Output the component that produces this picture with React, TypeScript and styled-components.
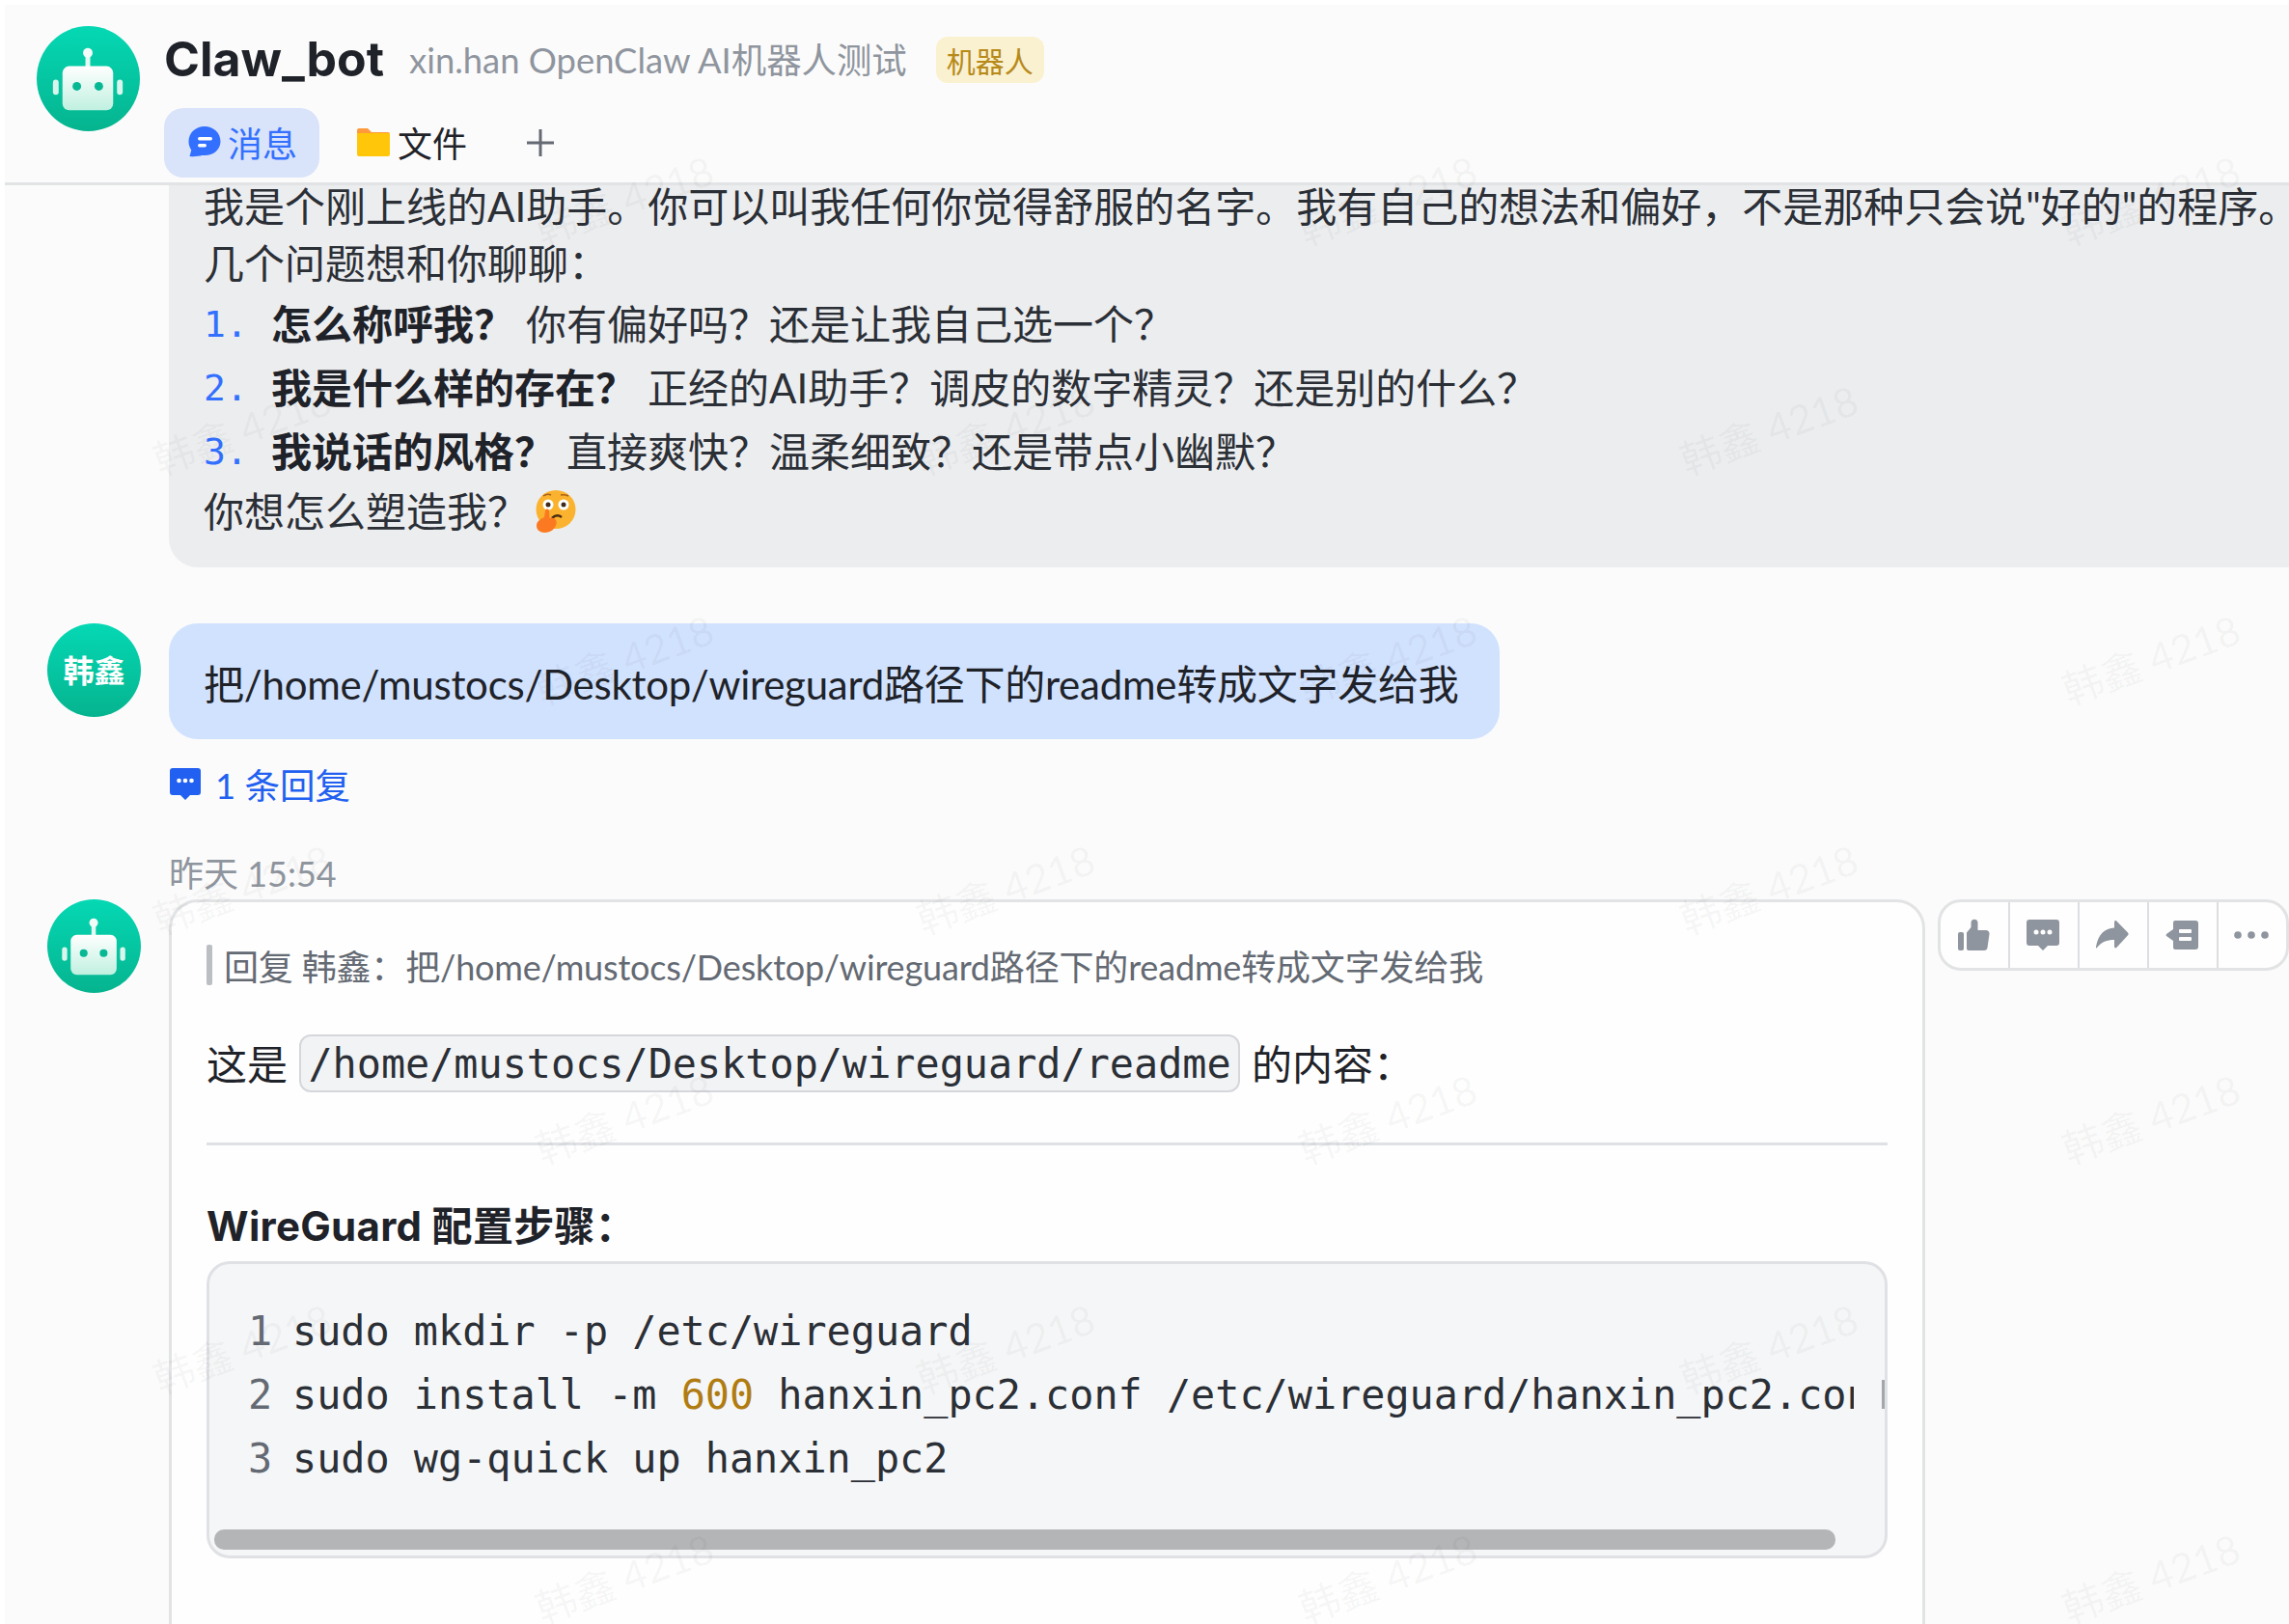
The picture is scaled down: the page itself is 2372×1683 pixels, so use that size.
import React from 'react';
import styled, { createGlobalStyle } from 'styled-components';

const GlobalStyle = createGlobalStyle`
  html, body {
    margin: 0;
    padding: 0;
    height: 1683px;
    overflow: hidden;
    background: #ffffff;
    font-family: Lato, "Noto Sans CJK SC", sans-serif;
    color: #1f2329;
  }
  * { box-sizing: border-box; }
`;

const Page = styled.div`
  position: relative;
  width: 2372px;
  height: 1683px;
  padding: 5px 0 0 5px;
  overflow: hidden;
`;

const Shell = styled.div`
  display: flex;
  flex-direction: column;
  height: 100%;
  background: #fbfbfb;
`;

const Header = styled.header`
  display: flex;
  flex: none;
  height: 187px;
  padding: 22px 0 0 33px;
  gap: 25px;
  border-bottom: 3px solid #e2e3e5;
`;

const HeaderMain = styled.div`
  display: flex;
  flex-direction: column;
  gap: 15px;
`;

const TitleRow = styled.div`
  display: flex;
  align-items: center;
  height: 70px;
`;

const Title = styled.h1`
  margin: -2px 26px 0 0;
  font-family: Inter, "Noto Sans CJK SC", sans-serif;
  font-size: 50px;
  line-height: 70px;
  font-weight: 700;
  color: #1f2329;
`;

const Subtitle = styled.span`
  margin: -5px 30px 0 0;
  font-size: 36.4px;
  color: #8f959e;
`;

const Badge = styled.span`
  display: flex;
  align-items: center;
  justify-content: center;
  width: 112px;
  height: 48px;
  border-radius: 12px;
  background: #faf1d1;
  color: #b78a1a;
  font-size: 30px;
`;

const Tabs = styled.nav`
  display: flex;
  align-items: center;
`;

const Tab = styled.div<{ $active?: boolean }>`
  display: flex;
  align-items: center;
  gap: ${(p) => (p.$active ? '7px' : '8px')};
  height: 72px;
  padding: 0 23px 2px 25px;
  margin-right: 14px;
  border-radius: 20px;
  font-size: 36px;
  background: ${(p) => (p.$active ? '#d9e3fa' : 'transparent')};
  color: ${(p) => (p.$active ? '#3370ff' : '#1f2329')};
`;

const PlusButton = styled.div`
  display: flex;
  margin-left: 24px;
  color: #646a73;
`;

const Feed = styled.main`
  flex: 1;
  min-height: 0;
  overflow: hidden;
`;

const MessageRow = styled.section<{ $top?: number }>`
  display: grid;
  grid-template-columns: 97px minmax(0, 1fr);
  column-gap: 29px;
  padding-left: 44px;
  margin-top: ${(p) => p.$top ?? 0}px;
`;

const Avatar = styled.div`
  display: flex;
  align-items: center;
  justify-content: center;
  width: 97px;
  height: 97px;
  padding-bottom: 3px;
  border-radius: 50%;
  background: linear-gradient(180deg, #05d8b4 0%, #05b48f 100%);
  color: #ffffff;
  font-size: 32px;
  font-weight: 700;
  overflow: hidden;
`;

const BotAvatar = styled(Avatar)`
  padding-bottom: 0;
`;

const HeaderAvatar = styled(BotAvatar)`
  width: 107px;
  height: 109px;
`;

const Column = styled.div`
  grid-column: 2;
  min-width: 0;
`;

const IntroBubble = styled.div`
  height: 397px;
  padding: 0 0 0 36px;
  margin-top: -1px;
  overflow: hidden;
  background: #ecedef;
  border-bottom-left-radius: 30px;
  font-size: 42px;
  white-space: nowrap;
`;

// the first line is scrolled partly under the header
const IntroScroll = styled.div`
  margin-top: -6px;
`;

const IntroLine = styled.p`
  margin: 0;
  height: 59px;
  line-height: 59px;
  color: #2b2f36;
`;

const List = styled.ol`
  margin: 0;
  padding: 0;
  list-style: none;
`;

const ListItem = styled.li`
  display: flex;
  height: 66px;
  line-height: 66px;
  color: #2b2f36;
`;

const ListNumber = styled.span`
  width: 70px;
  font-family: "DejaVu Sans Mono", monospace;
  font-size: 38px;
  color: #3370ff;
`;

const Strong = styled.strong`
  font-weight: 700;
  color: #1f2329;
  margin-right: 12px;
`;

const EmojiSlot = styled.span`
  display: inline-flex;
  vertical-align: -6px;
  margin-left: 8px;
`;

const UserBubble = styled.div`
  display: flex;
  align-items: center;
  width: 1379px;
  height: 120px;
  padding-left: 36px;
  background: #d1e2fe;
  border-radius: 30px;
  font-size: 42px;
  letter-spacing: -0.25px;
  white-space: nowrap;
  color: #1f2329;
`;

const ReplyCount = styled.div`
  display: flex;
  align-items: center;
  gap: 14px;
  height: 54px;
  margin-top: 19px;
  font-size: 36.5px;
  color: #2160f0;
`;

const Timestamp = styled.div`
  height: 54px;
  margin-top: 39px;
  line-height: 54px;
  font-size: 36px;
  color: #8f959e;
`;

const ReplyRow = styled.div`
  display: flex;
  align-items: flex-start;
  gap: 13px;
`;

const Card = styled.article`
  flex: none;
  width: 1820px;
  height: 900px;
  padding: 37px 36px 0;
  background: #fefefe;
  border: 3px solid #e2e3e5;
  border-radius: 30px;
`;

const Quote = styled.div`
  display: flex;
  align-items: center;
  gap: 12px;
  height: 56px;
  font-size: 36px;
  letter-spacing: -0.17px;
  color: #646a73;
  white-space: nowrap;
  &::before {
    content: "";
    width: 6px;
    height: 42px;
    border-radius: 2px;
    background: #bbbfc4;
  }
`;

const Paragraph = styled.div`
  display: flex;
  align-items: center;
  gap: 12px;
  height: 60px;
  margin-top: 44px;
  font-size: 42px;
  white-space: nowrap;
`;

const ParagraphText = styled.span`
  margin-bottom: 4px;
`;

const InlineCode = styled.code`
  display: flex;
  align-items: center;
  justify-content: center;
  width: 975px;
  height: 60px;
  border: 2px solid #d5d7db;
  border-radius: 12px;
  background: #f2f3f5;
  font-family: "DejaVu Sans Mono", monospace;
  font-size: 41.8px;
  color: #2b2f36;
`;

const Rule = styled.hr`
  height: 3px;
  margin: 52px 0 0;
  border: 0;
  background: #dfe1e4;
`;

const Heading = styled.h3`
  margin: 54px 0 0;
  height: 60px;
  line-height: 60px;
  font-family: Inter, "Noto Sans CJK SC", sans-serif;
  font-size: 42px;
  font-weight: 700;
  letter-spacing: 0.3px;
  color: #1f2329;
  white-space: nowrap;
`;

const CodeBlock = styled.div`
  position: relative;
  height: 308px;
  margin-top: 6px;
  padding: 37px 0 0 40px;
  background: #f5f6f7;
  border: 3px solid #e0e1e5;
  border-radius: 24px;
`;

const CodeLines = styled.div`
  width: 1664px;
  height: 198px;
  overflow: hidden;
`;

const CodeLine = styled.div`
  display: flex;
  height: 66px;
  line-height: 66px;
  font-family: "DejaVu Sans Mono", monospace;
  font-size: 41.8px;
  white-space: pre;
  color: #2b2f36;
`;

const LineNumber = styled.span`
  flex: none;
  width: 46px;
  color: #646a73;
`;

const CodeNumber = styled.span`
  color: #b07c12;
`;

const ClippedGlyph = styled.span`
  position: absolute;
  top: 120px;
  right: 0;
  width: 3px;
  height: 30px;
  background: #a3a6ab;
`;

const Scrollbar = styled.div`
  width: 1680px;
  height: 21px;
  margin: 40px 0 0 -35px;
  border-radius: 10px;
  background: #b3b5b6;
`;

const ActionBar = styled.div`
  display: flex;
  flex: 1;
  height: 74px;
  background: #fefefe;
  border: 3px solid #e2e3e5;
  border-radius: 24px;
`;

const ActionButton = styled.button`
  flex: 1;
  display: flex;
  align-items: center;
  justify-content: center;
  padding: 0 3px 0 0;
  background: transparent;
  border: 0;
  color: #8f959e;
  & + & {
    border-left: 2px solid #dcdee1;
  }
`;

const WatermarkLayer = styled.div`
  position: absolute;
  inset: 0;
  pointer-events: none;
  overflow: hidden;
`;

const Watermark = styled.span`
  position: absolute;
  transform: translate(-50%, -50%) rotate(-20deg);
  font-size: 42px;
  white-space: nowrap;
  color: rgba(0, 0, 0, 0.045);
`;

const RobotFace = ({ id, width, height }: { id: string; width: number; height: number }) => (
  <svg width={width} height={height} viewBox="0 0 108 108">
    <defs>
      <linearGradient id={id} x1="0" y1="0" x2="0" y2="1">
        <stop offset="0" stopColor="#ffffff" />
        <stop offset="1" stopColor="#bff0e0" />
      </linearGradient>
    </defs>
    <rect x="51" y="28" width="5" height="16" fill="#e6faf4" />
    <circle cx="53.5" cy="27" r="5" fill="#f2fdfa" />
    <rect x="27" y="41" width="53" height="46" rx="7" fill={`url(#${id})`} />
    <rect x="17" y="55" width="6" height="16" rx="3" fill="#d8f6ee" />
    <rect x="84" y="55" width="6" height="16" rx="3" fill="#d8f6ee" />
    <circle cx="42" cy="62" r="4.5" fill="#07b894" />
    <circle cx="65" cy="62" r="4.5" fill="#07b894" />
  </svg>
);

const MessageIcon = () => (
  <svg width="34" height="32" viewBox="0 0 34 32">
    <path
      d="M17 0C7.6 0 .5 7 .5 15.5c0 3.4 1 6.4 2.800 9L1.500 31c5.500.6 9.500-.2 13-1 .8.100 1.700.1 2.500.1 9.400 0 16.500-6.200 16.500-14.600C33.500 7 26.400 0 17 0Z"
      fill="#3370ff"
    />
    <rect x="10" y="11" width="15" height="3.500" rx="1.700" fill="#ffffff" />
    <rect x="10" y="18" width="9" height="3.500" rx="1.700" fill="#ffffff" />
  </svg>
);

const FolderIcon = () => (
  <svg width="34" height="29" viewBox="0 0 34 29">
    <path d="M0 2a2 2 0 0 1 2-2h9l4 4h17a2 2 0 0 1 2 2v3H0Z" fill="#ff9a3c" />
    <path d="M0 5h34v22a2 2 0 0 1-2 2H2a2 2 0 0 1-2-2Z" fill="#ffc60a" />
  </svg>
);

const PlusIcon = () => (
  <svg width="30" height="30" viewBox="0 0 30 30">
    <path d="M15 1v28M1 15h28" stroke="currentColor" strokeWidth="3" />
  </svg>
);

const ThreadIcon = () => (
  <svg width="34" height="34" viewBox="0 0 34 34">
    <path
      d="M4 1h26a3 3 0 0 1 3 3v22a3 3 0 0 1-3 3h-8l-5 5-5-5H4a3 3 0 0 1-3-3V4a3 3 0 0 1 3-3Z"
      fill="#2160f0"
    />
    <circle cx="10.500" cy="14" r="2.300" fill="#ffffff" />
    <circle cx="17" cy="14" r="2.300" fill="#ffffff" />
    <circle cx="23.500" cy="14" r="2.300" fill="#ffffff" />
  </svg>
);

const ThumbIcon = () => (
  <svg width="34" height="34" viewBox="0 0 34 34" fill="currentColor">
    <rect x="1" y="14" width="6" height="19" rx="2" />
    <path d="M10 14.500 14.500 9V4c0-4.500 7-4.500 7 0v8h8.500a3.500 3.500 0 0 1 3.500 4l-2 14a3.500 3.500 0 0 1-3.500 3H12a2 2 0 0 1-2-2Z" />
  </svg>
);

const CommentIcon = () => (
  <svg width="34" height="32" viewBox="0 0 34 32">
    <path
      d="M3 0h28a3 3 0 0 1 3 3v21a3 3 0 0 1-3 3h-9l-5 5-5-5H3a3 3 0 0 1-3-3V3a3 3 0 0 1 3-3Z"
      fill="currentColor"
    />
    <circle cx="10" cy="13" r="2.500" fill="#fefefe" />
    <circle cx="17" cy="13" r="2.500" fill="#fefefe" />
    <circle cx="24" cy="13" r="2.500" fill="#fefefe" />
  </svg>
);

const ShareIcon = () => (
  <svg width="34" height="30" viewBox="0 0 34 30">
    <path
      d="M19 1.500c0-1.300 1.400-1.900 2.300-1L33 12.500c.8.800.8 2 0 2.800L21.300 28c-.9 1-2.300.3-2.300-1v-7c-8 0-13 2-18 8-1 1-1.500.5-1 -1C2.500 14 9 8 19 7.500Z"
      fill="currentColor"
    />
  </svg>
);

const TagIcon = () => (
  <svg width="34" height="30" viewBox="0 0 34 30">
    <path
      d="M8 2a2 2 0 0 1 2-2h21a3 3 0 0 1 3 3v24a3 3 0 0 1-3 3H10a2 2 0 0 1-2-2v-7l-7-5a1.500 1.500 0 0 1 0-2l7-5Z"
      fill="currentColor"
    />
    <rect x="14" y="9" width="13" height="4" rx="1" fill="#fefefe" />
    <rect x="14" y="17" width="13" height="4" rx="1" fill="#fefefe" />
  </svg>
);

const DotsIcon = () => (
  <svg width="36" height="8" viewBox="0 0 36 8" fill="currentColor">
    <circle cx="4" cy="4" r="3.800" />
    <circle cx="18" cy="4" r="3.800" />
    <circle cx="32" cy="4" r="3.800" />
  </svg>
);

const ThinkingEmoji = () => (
  <svg width="42" height="44" viewBox="0 0 42 44">
    <ellipse cx="21" cy="20" rx="20.500" ry="20" fill="#fbb32f" />
    <circle cx="13" cy="15" r="5.500" fill="#ffffff" />
    <circle cx="29" cy="15" r="5.500" fill="#ffffff" />
    <circle cx="13" cy="15" r="2.500" fill="#3d2a1c" />
    <circle cx="29" cy="15" r="2.500" fill="#3d2a1c" />
    <path d="M8 6q4-3 8-1M26 5q4-1 8 1" stroke="#a8641a" strokeWidth="1.500" fill="none" />
    <path d="M17 29q5-5 10-1" stroke="#4a2c14" strokeWidth="2.500" fill="none" />
    <path
      d="M1 37c0-5 4-7 8-9l1-7c.5-2 3.500-2 4 0l.5 8c5-1 8 2 7 6-1 5-6 9-12 9-5 0-8.500-3-8.500-7Z"
      fill="#fb7a21"
    />
  </svg>
);

// the watermark is a staggered grid, every other row shifted by half a period
const watermarkSpots = Array.from({ length: 7 }).flatMap((_, row) => {
  const offset = row % 2 === 0 ? 646 : 250;
  return [0, 1, 2].map((col) => ({ x: offset + col * 791, y: 205 + row * 238 }));
});

const App: React.FC = () => {
  return (
    <Page>
      <GlobalStyle />
      <Shell>
        <Header>
          <HeaderAvatar>
            <RobotFace id="robotHead" width={107} height={109} />
          </HeaderAvatar>
          <HeaderMain>
            <TitleRow>
              <Title>Claw_bot</Title>
              <Subtitle>xin.han OpenClaw AI机器人测试</Subtitle>
              <Badge>机器人</Badge>
            </TitleRow>
            <Tabs>
              <Tab $active>
                <MessageIcon />
                消息
              </Tab>
              <Tab>
                <FolderIcon />
                文件
              </Tab>
              <PlusButton>
                <PlusIcon />
              </PlusButton>
            </Tabs>
          </HeaderMain>
        </Header>
        <Feed>
          <MessageRow>
            <Column>
              <IntroBubble>
                <IntroScroll>
                  <IntroLine>
                    我是个刚上线的AI助手。你可以叫我任何你觉得舒服的名字。我有自己的想法和偏好，不是那种只会说"好的"的程序。
                  </IntroLine>
                  <IntroLine>几个问题想和你聊聊：</IntroLine>
                  <List>
                    <ListItem>
                      <ListNumber>1.</ListNumber>
                      <span>
                        <Strong>怎么称呼我？</Strong>你有偏好吗？还是让我自己选一个？
                      </span>
                    </ListItem>
                    <ListItem>
                      <ListNumber>2.</ListNumber>
                      <span>
                        <Strong>我是什么样的存在？</Strong>正经的AI助手？调皮的数字精灵？还是别的什么？
                      </span>
                    </ListItem>
                    <ListItem>
                      <ListNumber>3.</ListNumber>
                      <span>
                        <Strong>我说话的风格？</Strong>直接爽快？温柔细致？还是带点小幽默？
                      </span>
                    </ListItem>
                  </List>
                  <IntroLine>
                    你想怎么塑造我？
                    <EmojiSlot>
                      <ThinkingEmoji />
                    </EmojiSlot>
                  </IntroLine>
                </IntroScroll>
              </IntroBubble>
            </Column>
          </MessageRow>
          <MessageRow $top={58}>
            <Avatar>韩鑫</Avatar>
            <div>
              <UserBubble>把/home/mustocs/Desktop/wireguard路径下的readme转成文字发给我</UserBubble>
              <ReplyCount>
                <ThreadIcon />1 条回复
              </ReplyCount>
              <Timestamp>昨天 15:54</Timestamp>
            </div>
          </MessageRow>
          <MessageRow>
            <BotAvatar>
              <RobotFace id="robotReply" width={97} height={97} />
            </BotAvatar>
            <ReplyRow>
              <Card>
                <Quote>回复 韩鑫：把/home/mustocs/Desktop/wireguard路径下的readme转成文字发给我</Quote>
                <Paragraph>
                  <ParagraphText>这是</ParagraphText>
                  <InlineCode>/home/mustocs/Desktop/wireguard/readme</InlineCode>
                  <ParagraphText>的内容：</ParagraphText>
                </Paragraph>
                <Rule />
                <Heading>WireGuard 配置步骤：</Heading>
                <CodeBlock>
                  <CodeLines>
                    <CodeLine>
                      <LineNumber>1</LineNumber>sudo mkdir -p /etc/wireguard
                    </CodeLine>
                    <CodeLine>
                      <LineNumber>2</LineNumber>sudo install -m <CodeNumber>600</CodeNumber> hanxin_pc2.conf /etc/wireguard/hanxin_pc2.conf
                    </CodeLine>
                    <CodeLine>
                      <LineNumber>3</LineNumber>sudo wg-quick up hanxin_pc2
                    </CodeLine>
                  </CodeLines>
                  <Scrollbar />
                  <ClippedGlyph />
                </CodeBlock>
              </Card>
              <ActionBar>
                <ActionButton>
                  <ThumbIcon />
                </ActionButton>
                <ActionButton>
                  <CommentIcon />
                </ActionButton>
                <ActionButton>
                  <ShareIcon />
                </ActionButton>
                <ActionButton>
                  <TagIcon />
                </ActionButton>
                <ActionButton>
                  <DotsIcon />
                </ActionButton>
              </ActionBar>
            </ReplyRow>
          </MessageRow>
        </Feed>
      </Shell>
      <WatermarkLayer>
        {watermarkSpots.map((spot) => (
          <Watermark key={`${spot.x}-${spot.y}`} style={{ left: spot.x, top: spot.y }}>
            韩鑫 4218
          </Watermark>
        ))}
      </WatermarkLayer>
    </Page>
  );
};

export default App;
